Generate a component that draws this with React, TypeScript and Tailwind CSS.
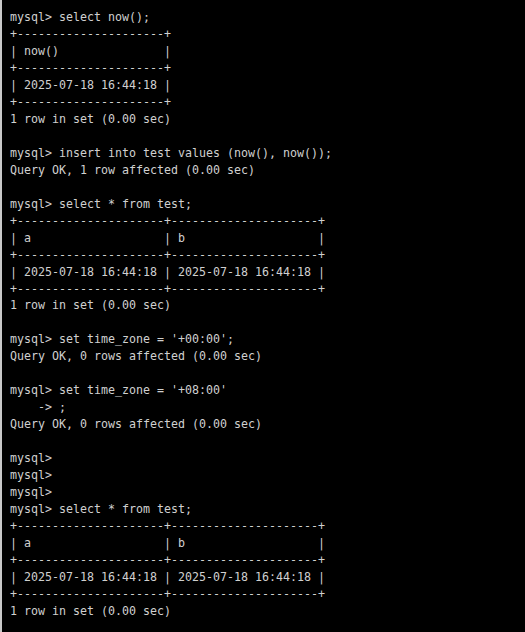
const lines = [
  "mysql> select now();",
  "+---------------------+",
  "| now()               |",
  "+---------------------+",
  "| 2025-07-18 16:44:18 |",
  "+---------------------+",
  "1 row in set (0.00 sec)",
  "",
  "mysql> insert into test values (now(), now());",
  "Query OK, 1 row affected (0.00 sec)",
  "",
  "mysql> select * from test;",
  "+---------------------+---------------------+",
  "| a                   | b                   |",
  "+---------------------+---------------------+",
  "| 2025-07-18 16:44:18 | 2025-07-18 16:44:18 |",
  "+---------------------+---------------------+",
  "1 row in set (0.00 sec)",
  "",
  "mysql> set time_zone = '+00:00';",
  "Query OK, 0 rows affected (0.00 sec)",
  "",
  "mysql> set time_zone = '+08:00'",
  "    -> ;",
  "Query OK, 0 rows affected (0.00 sec)",
  "",
  "mysql>",
  "mysql>",
  "mysql>",
  "mysql> select * from test;",
  "+---------------------+---------------------+",
  "| a                   | b                   |",
  "+---------------------+---------------------+",
  "| 2025-07-18 16:44:18 | 2025-07-18 16:44:18 |",
  "+---------------------+---------------------+",
  "1 row in set (0.00 sec)",
]

export default function App() {
  return (
    <div className="w-[525px] h-[632px] bg-black border-l-2 border-[#c9c9c9] overflow-hidden">
      <pre className="pl-2 pt-[9px] text-[11.63px] leading-[17px] text-[#d0d0d0] font-['DejaVu_Sans_Mono',monospace]">
        {lines.map((l, i) => (
          <div key={i} className="h-[16.97px] whitespace-pre">
            {l}
          </div>
        ))}
      </pre>
    </div>
  )
}
